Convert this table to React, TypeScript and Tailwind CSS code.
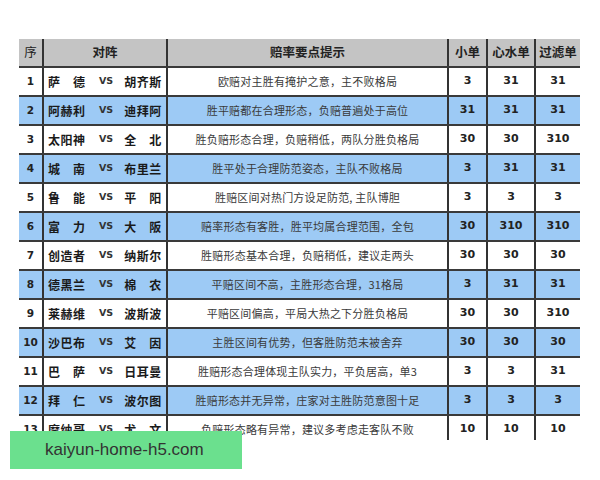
import React from "react";

type Row = {
  no: number;
  home: string;
  away: string;
  tip: string;
  a: string;
  b: string;
  c: string;
};

const rows: Row[] = [
  { no: 1, home: "萨德", away: "胡齐斯", tip: "欧赔对主胜有掩护之意，主不败格局", a: "3", b: "31", c: "31" },
  { no: 2, home: "阿赫利", away: "迪拜阿", tip: "胜平赔都在合理形态，负赔普遍处于高位", a: "31", b: "31", c: "31" },
  { no: 3, home: "太阳神", away: "全北", tip: "胜负赔形态合理，负赔稍低，两队分胜负格局", a: "30", b: "30", c: "310" },
  { no: 4, home: "城南", away: "布里兰", tip: "胜平处于合理防范姿态，主队不败格局", a: "3", b: "31", c: "31" },
  { no: 5, home: "鲁能", away: "平阳", tip: "胜赔区间对热门方设足防范, 主队博胆", a: "3", b: "3", c: "3" },
  { no: 6, home: "富力", away: "大阪", tip: "赔率形态有客胜，胜平均属合理范围，全包", a: "30", b: "310", c: "310" },
  { no: 7, home: "创造者", away: "纳斯尔", tip: "胜赔形态基本合理，负赔稍低，建议走两头", a: "30", b: "30", c: "30" },
  { no: 8, home: "德黑兰", away: "棉农", tip: "平赔区间不高，主胜形态合理，31格局", a: "3", b: "31", c: "31" },
  { no: 9, home: "莱赫维", away: "波斯波", tip: "平赔区间偏高，平局大热之下分胜负格局", a: "30", b: "30", c: "310" },
  { no: 10, home: "沙巴布", away: "艾因", tip: "主胜区间有优势，但客胜防范未被舍弃", a: "30", b: "30", c: "30" },
  { no: 11, home: "巴萨", away: "日耳曼", tip: "胜赔形态合理体现主队实力，平负居高，单3", a: "3", b: "3", c: "31" },
  { no: 12, home: "拜仁", away: "波尔图", tip: "胜赔形态并无异常，庄家对主胜防范意图十足", a: "3", b: "3", c: "3" },
  { no: 13, home: "摩纳哥", away: "尤文", tip: "负赔形态略有异常，建议多考虑走客队不败", a: "10", b: "10", c: "10" },
];

const cjk = { fontFamily: '"Noto Sans CJK SC", sans-serif' };
const num = { fontFamily: '"DejaVu Sans", "Noto Sans CJK SC", sans-serif' };

// two-character names are spread over the width of three characters
const Team = ({ name }: { name: string }) => (
  <div className="flex w-[37px] justify-between text-[12px] font-bold text-[#1a1a1a]" style={cjk}>
    {name.split("").map((ch, i) => (
      <span key={i}>{ch}</span>
    ))}
  </div>
);

const cols = "grid grid-cols-[23px_124px_281px_39px_48px_46px]";
const cell = "flex items-center justify-center border-l-2 border-[#333]";

export default function App() {
  return (
    <div className="relative h-[480px] w-[600px] bg-white">
      <div className="pl-[19px] pt-[39px]">
        <div className="h-[401px] w-[561px] overflow-hidden">
          <div className={`${cols} h-[27px] bg-[#c4c4c4] text-[12.5px] font-bold text-[#222]`} style={cjk}>
            <div className="flex items-center justify-center font-normal">序</div>
            <div className={cell}>对阵</div>
            <div className={cell}>赔率要点提示</div>
            <div className={cell}>小单</div>
            <div className={cell}>心水单</div>
            <div className={cell}>过滤单</div>
          </div>
          {rows.map((r) => (
            <div
              key={r.no}
              className={`${cols} h-[29px] border-t-2 border-[#3a3a3a] ${r.no % 2 === 0 ? "bg-[#9dcaf5]" : "bg-white"}`}
            >
              <div className="flex items-center justify-center text-[10.5px] font-bold text-[#222]" style={num}>
                {r.no}
              </div>
              <div className="flex items-center border-l-2 border-[#333] pl-[4px]">
                <Team name={r.home} />
                <span className="ml-[14px] text-[9.5px] font-bold text-[#333]" style={num}>
                  VS
                </span>
                <div className="ml-[11px]">
                  <Team name={r.away} />
                </div>
              </div>
              <div className={`${cell} text-[11px] tracking-[0.2px] text-[#3a3a3a]`} style={cjk}>
                {r.tip}
              </div>
              <div className={`${cell} text-[11px] font-bold text-[#222]`} style={num}>
                {r.a}
              </div>
              <div className={`${cell} text-[11px] font-bold text-[#222]`} style={num}>
                {r.b}
              </div>
              <div className={`${cell} text-[11px] font-bold text-[#222]`} style={num}>
                {r.c}
              </div>
            </div>
          ))}
        </div>
      </div>
      <div
        className="absolute left-[10px] top-[431px] flex h-[38px] w-[232px] items-center bg-[#6be08e] pl-[35px] text-[17px] text-[#333]"
        style={{ fontFamily: '"Liberation Sans", Arial, sans-serif' }}
      >
        kaiyun-home-h5.com
      </div>
    </div>
  );
}
